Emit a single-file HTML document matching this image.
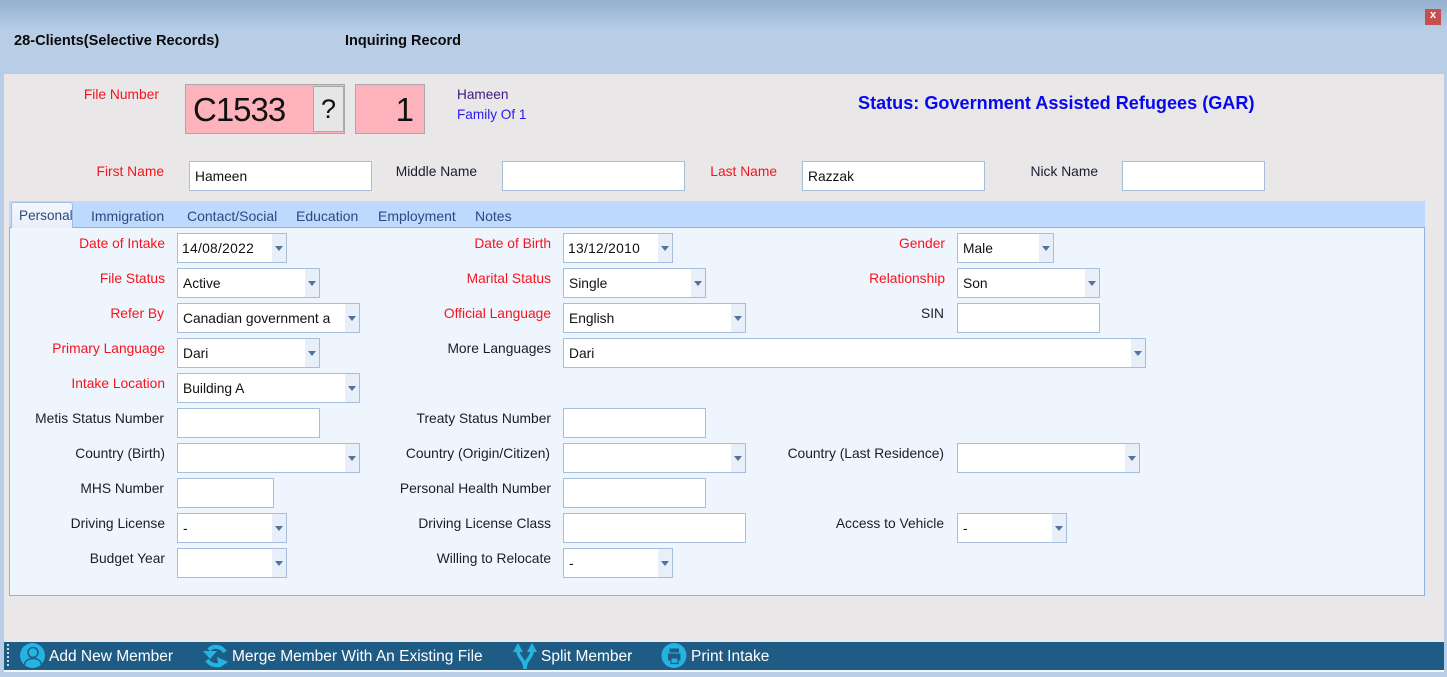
<!DOCTYPE html>
<html><head><meta charset="utf-8"><style>
html,body{margin:0;padding:0}
body{width:1447px;height:677px;position:relative;overflow:hidden;background:#b8cee6;font-family:"Liberation Sans",sans-serif;font-size:14px;color:#000}
div{position:absolute;box-sizing:border-box;white-space:nowrap}
.l{text-align:right;height:18px;line-height:18px;font-size:13.8px;color:#1c1c2c;width:200px}
.r{color:#f5141e}
.f{background:#fff;border:1px solid #a6bedc;height:30px;line-height:30px;padding-left:5px;font-size:13.8px;color:#111}
.f i{position:absolute;right:0;top:0;bottom:0;width:14px;background:#e9eff8}
.f i:after{content:"";position:absolute;left:3px;top:12px;border-left:4px solid transparent;border-right:4px solid transparent;border-top:5px solid #54739b}
.d{letter-spacing:.3px}
.t{top:207px;height:18px;line-height:18px;font-size:14px;color:#2a4a80}
.b{top:648px;height:18px;line-height:18px;font-size:15.5px;color:#fff}
</style></head><body>
<div style="left:0;top:0;width:1447px;height:30px;background:linear-gradient(#98b3d0,#98b3d0 12%,#b8cee6)"></div>
<div style="left:1425px;top:9px;width:16px;height:16px;background:#c65050;color:#fff;font-family:'Liberation Mono',monospace;font-size:11px;font-weight:bold;line-height:15px;text-align:center">x</div>
<div style="left:14px;top:32px;font-size:14.6px;font-weight:bold;line-height:18px;color:#0a0a0a">28-Clients(Selective Records)</div>
<div style="left:345px;top:32px;font-size:14.5px;font-weight:bold;line-height:18px;color:#0a0a0a">Inquiring Record</div>
<div style="left:4px;top:74px;width:1440px;height:598px;background:#e9e7e8"></div>

<div class="l r" style="left:-41px;top:86px">File Number</div>
<div style="left:185px;top:84px;width:160px;height:50px;background:#feb2bc;border:1px solid #a8a8ac;font-size:33px;line-height:49px;padding-left:7px;letter-spacing:-1px;color:#111">C1533</div>
<div style="left:313px;top:86px;width:31px;height:46px;background:#e6e6e6;border:1px solid #aaa;font-size:27px;line-height:44px;text-align:center;color:#111">?</div>
<div style="left:355px;top:84px;width:70px;height:50px;background:#feb2bc;border:1px solid #a8a8ac;font-size:33px;line-height:49px;text-align:right;padding-right:10px;color:#111">1</div>
<div style="left:457px;top:86px;font-size:13.6px;line-height:18px;color:#3c1a80">Hameen</div>
<div style="left:457px;top:106px;font-size:13.6px;line-height:18px;color:#2a1af0">Family Of 1</div>
<div style="left:858px;top:92px;font-size:18.1px;line-height:22px;font-weight:bold;color:#0808f0">Status: Government Assisted Refugees (GAR)</div>

<div class="l r" style="left:-36px;top:163px">First Name</div>
<div class="f" style="left:189px;top:161px;width:183px">Hameen</div>
<div class="l" style="left:277px;top:163px">Middle Name</div>
<div class="f" style="left:502px;top:161px;width:183px"></div>
<div class="l r" style="left:577px;top:163px">Last Name</div>
<div class="f" style="left:802px;top:161px;width:183px">Razzak</div>
<div class="l" style="left:898px;top:163px">Nick Name</div>
<div class="f" style="left:1122px;top:161px;width:143px"></div>

<div style="left:9px;top:201px;width:1416px;height:27px;background:#bdd9fd"></div>
<div style="left:9px;top:227px;width:1416px;height:369px;background:#eff5fd;border:1px solid #8fb2df"></div>
<div style="left:11px;top:202px;width:62px;height:26px;background:linear-gradient(#f4f7fc,#e9eff9);border:1px solid #9dbde6;border-bottom:0;border-radius:3px 3px 0 0"></div>
<div class="t" style="left:19px;font-size:13.6px">Personal</div>
<div class="t" style="left:91px">Immigration</div>
<div class="t" style="left:187px">Contact/Social</div>
<div class="t" style="left:296px">Education</div>
<div class="t" style="left:378px">Employment</div>
<div class="t" style="left:475px">Notes</div>

<div class="l r" style="left:-35px;top:235px">Date of Intake</div>
<div class="f d" style="left:177px;top:233px;width:110px;padding-left:4px">14/08/2022<i></i></div>
<div class="l r" style="left:351px;top:235px">Date of Birth</div>
<div class="f d" style="left:563px;top:233px;width:110px;padding-left:4px">13/12/2010<i></i></div>
<div class="l r" style="left:745px;top:235px">Gender</div>
<div class="f" style="left:957px;top:233px;width:97px">Male<i></i></div>

<div class="l r" style="left:-35px;top:270px">File Status</div>
<div class="f" style="left:177px;top:268px;width:143px">Active<i></i></div>
<div class="l r" style="left:351px;top:270px">Marital Status</div>
<div class="f" style="left:563px;top:268px;width:143px">Single<i></i></div>
<div class="l r" style="left:745px;top:270px">Relationship</div>
<div class="f" style="left:957px;top:268px;width:143px">Son<i></i></div>

<div class="l r" style="left:-36px;top:305px">Refer By</div>
<div class="f" style="left:177px;top:303px;width:183px">Canadian government a<i></i></div>
<div class="l r" style="left:351px;top:305px">Official Language</div>
<div class="f" style="left:563px;top:303px;width:183px">English<i></i></div>
<div class="l" style="left:744px;top:305px">SIN</div>
<div class="f" style="left:957px;top:303px;width:143px"></div>

<div class="l r" style="left:-35px;top:340px">Primary Language</div>
<div class="f" style="left:177px;top:338px;width:143px">Dari<i></i></div>
<div class="l" style="left:351px;top:340px">More Languages</div>
<div class="f" style="left:563px;top:338px;width:583px">Dari<i></i></div>

<div class="l r" style="left:-35px;top:375px">Intake Location</div>
<div class="f" style="left:177px;top:373px;width:183px">Building A<i></i></div>

<div class="l" style="left:-36px;top:410px">Metis Status Number</div>
<div class="f" style="left:177px;top:408px;width:143px"></div>
<div class="l" style="left:351px;top:410px">Treaty Status Number</div>
<div class="f" style="left:563px;top:408px;width:143px"></div>

<div class="l" style="left:-35px;top:445px">Country (Birth)</div>
<div class="f" style="left:177px;top:443px;width:183px"><i></i></div>
<div class="l" style="left:350px;top:445px">Country (Origin/Citizen)</div>
<div class="f" style="left:563px;top:443px;width:183px"><i></i></div>
<div class="l" style="left:744px;top:445px">Country (Last Residence)</div>
<div class="f" style="left:957px;top:443px;width:183px"><i></i></div>

<div class="l" style="left:-36px;top:480px">MHS Number</div>
<div class="f" style="left:177px;top:478px;width:97px"></div>
<div class="l" style="left:351px;top:480px">Personal Health Number</div>
<div class="f" style="left:563px;top:478px;width:143px"></div>

<div class="l" style="left:-35px;top:515px">Driving License</div>
<div class="f" style="left:177px;top:513px;width:110px">-<i></i></div>
<div class="l" style="left:351px;top:515px">Driving License Class</div>
<div class="f" style="left:563px;top:513px;width:183px"></div>
<div class="l" style="left:744px;top:515px">Access to Vehicle</div>
<div class="f" style="left:957px;top:513px;width:110px">-<i></i></div>

<div class="l" style="left:-35px;top:550px">Budget Year</div>
<div class="f" style="left:177px;top:548px;width:110px"><i></i></div>
<div class="l" style="left:351px;top:550px">Willing to Relocate</div>
<div class="f" style="left:563px;top:548px;width:110px">-<i></i></div>

<div style="left:4px;top:642px;width:1440px;height:28px;background:#1f5c85"></div>
<div style="left:4px;top:670px;width:1440px;height:2px;background:#f4f6f9"></div>
<div style="left:7px;top:644px;width:2px;height:24px;background:repeating-linear-gradient(#cfdbe6 0 2px,transparent 2px 4px)"></div>
<svg style="position:absolute;left:0;top:640px" width="700" height="32" viewBox="0 0 700 32">
<circle cx="32.500" cy="15.500" r="12.500" fill="#25b4e2"/>
<circle cx="33" cy="12.500" r="5" fill="none" stroke="#1f5c85" stroke-width="1.500"/>
<path d="M24.500 25c.5-4.500 4-6.500 8.500-6.500s8 2 8.500 6.500" fill="none" stroke="#1f5c85" stroke-width="1.500"/>
<path d="M225 12C221 6 213 5 209 10" fill="none" stroke="#25b4e2" stroke-width="4"/>
<path d="M203 11h14l-7 8z" fill="#25b4e2"/>
<path d="M207 20c4 6 12 7 17 2" fill="none" stroke="#25b4e2" stroke-width="4"/>
<path d="M217 17l11 5-9 6z" fill="#25b4e2"/>
<path d="M518 11C518 18 525 19 525 29M532 11C532 18 525 19 525 29" fill="none" stroke="#25b4e2" stroke-width="3.500"/>
<path d="M518 3l5 9h-10zM532 3l5 9h-10z" fill="#25b4e2"/>
<circle cx="674" cy="15.500" r="12.500" fill="#25b4e2"/>
<path d="M669.500 8.500h9.500v4h-9.500zM668 13.500h12.500v7h-12.500z" fill="#1f5c85"/>
<path d="M671 18h7v5.500h-7z" fill="#25b4e2" stroke="#1f5c85" stroke-width="1.200"/>
</svg>
<div class="b" style="left:49px">Add New Member</div>
<div class="b" style="left:232px">Merge Member With An Existing File</div>
<div class="b" style="left:541px">Split Member</div>
<div class="b" style="left:691px">Print Intake</div>
</body></html>
